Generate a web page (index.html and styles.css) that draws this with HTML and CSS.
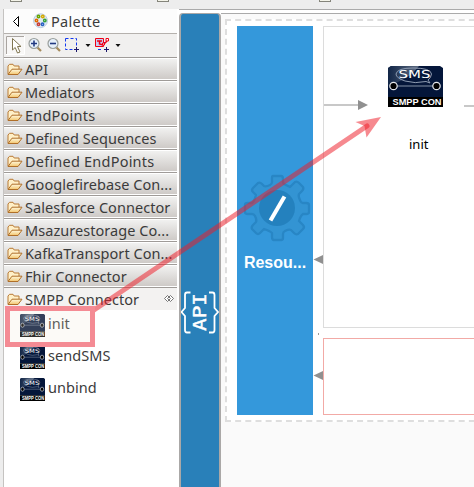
FILE: index.html
```html
<!DOCTYPE html>
<html lang="en">
<head>
<meta charset="utf-8">
<title>Palette</title>
<link rel="stylesheet" href="styles.css">
</head>
<body>
<svg class="defs" width="0" height="0">
  <defs>
    <linearGradient id="paper" x1="0" y1="0" x2="0" y2="1"><stop offset="0" stop-color="#fff9df"/><stop offset="1" stop-color="#f3c56c"/></linearGradient>
    <linearGradient id="shine" x1="0" y1="0" x2="1" y2="0"><stop offset="0" stop-color="#162b4b"/><stop offset="1" stop-color="#7a8799"/></linearGradient>
    <symbol id="folder" viewBox="0 0 16 13">
      <path d="M1 11V3L2.500 1.300H6L7.200 3H12V6" fill="#fff0c8" stroke="#b97a35"/>
      <path d="M1 11.500L5 6.200H15L11 11.500Z" fill="url(#paper)" stroke="#b06f28"/>
    </symbol>
    <symbol id="sms" viewBox="0 0 55 41">
      <path d="M0 2L3 0H52L55 2V31H0Z" fill="#04163a"/>
      <path d="M0 2L3 0H31L25 7Q15 15 0 20Z" fill="url(#shine)" opacity=".75"/>
      <path d="M38 15.500Q27 18 17 15Q8 12 8 8Q9 2 25 2Q43 2 43.500 8Q43 12 40 14L42 17Z" fill="none" stroke="#8d9bb1"/>
      <text x="10.500" y="11.800" textLength="32" lengthAdjust="spacingAndGlyphs" class="sms-word">SMS</text>
      <path d="M9 20H45" stroke="#43536f" stroke-width="2"/>
      <circle cx="5.500" cy="20" r="3.700" fill="#000" stroke="#e4e7ec" stroke-width="1.200"/>
      <circle cx="48.500" cy="20" r="3.700" fill="#000" stroke="#e4e7ec" stroke-width="1.200"/>
      <path d="M0 31H55V41H0Z" fill="#000"/>
      <text x="4.500" y="39" textLength="49" lengthAdjust="spacingAndGlyphs" class="sms-label">SMPP CON</text>
    </symbol>
  </defs>
</svg>
<div class="app">
  <div class="strip"><i class="tab t1"></i><i class="tab t2"></i><i class="tab t3"></i></div>
  <div class="main">
    <aside class="palette">
      <header class="title">
        <svg width="50" height="24" viewBox="4 9 50 24">
          <path d="M18.500 16.500V26.500L13.500 21.500Z" fill="#fff" stroke="#000"/>
          <circle cx="40.500" cy="20.700" r="6.900" fill="#dfe9f3" stroke="#b9cbe0"/>
          <g fill="#fff" stroke-width="1.500"><circle cx="38.500" cy="16.500" r="1.200" stroke="#68a500"/><circle cx="42.800" cy="16.500" r="1.200" stroke="#d5a900"/><circle cx="36.500" cy="20.500" r="1.200" stroke="#e26b00"/><circle cx="44.800" cy="20.500" r="1.200" stroke="#34a037"/><circle cx="38.500" cy="24.300" r="1.200" stroke="#c83c38"/><circle cx="42.500" cy="24.300" r="1.200" stroke="#2862c4"/></g>
        </svg>
        <span>Palette</span>
      </header>
      <div class="tools">
        <svg width="173" height="23" viewBox="4 34 173 23">
          <path d="M6 36H24V54H6Z" fill="#f8f7f6"/><path d="M6.500 54V36.500H24" stroke="#a9a4a0" fill="none"/><path d="M24.500 36V54.500H6" stroke="#fff" fill="none"/>
          <path d="M12.500 38.500V50L15.200 47.500L17.500 53L20 52L17.500 46.500H21Z" fill="#fff" stroke="#807551"/>
          <g fill="none"><path d="M37.500 47.500L41 51" stroke="#a58b5c" stroke-width="2.200"/><circle cx="34" cy="43.500" r="5" fill="#e6f0fb" stroke="#9a9f9c" stroke-width="1.200"/><path d="M31 43.500H37M34 40.500V46.500" stroke="#223a82" stroke-width="1.600"/>
          <path d="M56.500 47.500L60 51" stroke="#a58b5c" stroke-width="2.200"/><circle cx="53" cy="43.500" r="5" fill="#e6f0fb" stroke="#9a9f9c" stroke-width="1.200"/><path d="M50 43.500H56" stroke="#223a82" stroke-width="1.600"/>
          <path d="M65.500 38.500H76.500V46M65.500 38.500V49.500H73" stroke="#1238f0" stroke-dasharray="3 2"/><path d="M74 49.500H79M76.500 47V52" stroke="#1c176b"/>
          <path d="M98 49.500H103M98.500 44V48M104.500 42V46" stroke="#1238f0" stroke-dasharray="3 2"/><path d="M104 49.500H109M106.500 47V52" stroke="#1c176b"/>
          <path d="M95.500 38.500H103.500V46.500H95.500Z" fill="#c4cdf5" stroke="#f00014"/><path d="M97 41H102M99.500 41V44L103 45L107 41" stroke="#f00014" stroke-width="1.500"/><path d="M106 38.500H108.500V41H106ZM102.500 43H104.500V45H102.500Z" fill="#fff" stroke="#f00014"/></g>
          <path d="M85.500 44H90.500L88 47ZM115.500 44H120.500L118 47Z" fill="#111"/>
        </svg>
      </div>
      <div class="drawer"><svg class="folder"><use href="#folder"/></svg><span>API</span></div>
      <div class="drawer"><svg class="folder"><use href="#folder"/></svg><span>Mediators</span></div>
      <div class="drawer wide"><svg class="folder"><use href="#folder"/></svg><span>EndPoints</span></div>
      <div class="drawer"><svg class="folder"><use href="#folder"/></svg><span>Defined Sequences</span></div>
      <div class="drawer wide"><svg class="folder"><use href="#folder"/></svg><span>Defined EndPoints</span></div>
      <div class="drawer"><svg class="folder"><use href="#folder"/></svg><span>Googlefirebase Con...</span></div>
      <div class="drawer"><svg class="folder"><use href="#folder"/></svg><span>Salesforce Connector</span></div>
      <div class="drawer"><svg class="folder"><use href="#folder"/></svg><span>Msazurestorage Co...</span></div>
      <div class="drawer"><svg class="folder"><use href="#folder"/></svg><span>KafkaTransport Con...</span></div>
      <div class="drawer"><svg class="folder"><use href="#folder"/></svg><span>Fhir Connector</span></div>
      <div class="drawer open"><svg class="folder"><use href="#folder"/></svg><span>SMPP Connector</span>
        <svg class="pin" width="10" height="7" viewBox="0 0 10 7"><path d="M3.500 .5L.5 3.500L3.500 6.500L5 5L3.500 3.500L5 2ZM6.500 .5L9.500 3.500L6.500 6.500L5 5L6.500 3.500L5 2Z" fill="#fff" stroke="#666" stroke-width=".9"/></svg>
      </div>
      <div class="entry"><svg class="thumb" viewBox="0 0 55 41" preserveAspectRatio="none"><use href="#sms"/></svg><span>init</span></div>
      <div class="entry"><svg class="thumb" viewBox="0 0 55 41" preserveAspectRatio="none"><use href="#sms"/></svg><span>sendSMS</span></div>
      <div class="entry"><svg class="thumb" viewBox="0 0 55 41" preserveAspectRatio="none"><use href="#sms"/></svg><span>unbind</span></div>
    </aside>
    <section class="editor">
      <div class="api">
        <svg width="38" height="46" viewBox="181 290 38 46">
          <g fill="none" stroke="#fff" stroke-width="1.800"><path d="M190.500 292.500H187Q185 292.500 185 295V308L181.500 312L185 316V330Q185 332.500 187 332.500H190.500M209 292.500H212.500Q214.500 292.500 214.500 295V308L218 312L214.500 316V330Q214.500 332.500 212.500 332.500H209"/></g>
          <text transform="translate(205.800 331) rotate(-90)" textLength="38" lengthAdjust="spacingAndGlyphs" class="api-text">API</text>
        </svg>
      </div>
      <div class="canvas">
        <div class="frame">
          <div class="resource">
            <svg width="76" height="70" viewBox="239 173 76 70">
              <g fill="#3394d3" stroke="#2886c5" stroke-width="2.300" stroke-linejoin="round"><path d="M273 176H281Q283 176 283 179V182Q283 184 286 185L290 187L295 182Q297 181 299 183L303 187Q304 189 302 191L299 194Q298 196 300 200Q301 203 303 203H306Q309 203 309 205V212Q309 214 306 214H303Q301 215 299 221L303 225Q305 227 303 229L298 234Q296 235 294 233L291 230Q289 229 285 231Q283 232 283 234V238Q283 240 281 240H274Q272 240 272 237V233Q270 231 264 229L260 233Q258 235 256 233L252 229Q251 227 253 225L256 222Q257 220 255 216Q254 214 252 214H248Q245 214 245 212V205Q245 203 248 203H252Q254 202 256 195L253 192Q251 190 253 188L258 183Q260 182 262 184L264 186Q266 187 270 185Q272 184 272 182V178Q272 176 273 176Z"/></g>
              <circle cx="277" cy="208" r="18" fill="#2481be"/><path d="M270.500 220.500L284.500 196.500" stroke="#fff" stroke-width="4"/>
            </svg>
            <b>Resou...</b>
          </div>
          <div class="flows">
            <div class="flow in">
              <svg class="node" width="55" height="41"><use href="#sms"/></svg>
              <span>init</span>
            </div>
            <div class="flow fault"></div>
          </div>
        </div>
      </div>
    </section>
  </div>
  <svg class="overlay" width="474" height="487" viewBox="0 0 474 487">
    <path d="M324 105H359M464 106H474" stroke="#c8c8c8" stroke-width="2"/>
    <path d="M358 100L368 105L358 110Z" fill="#909090"/>
    <path d="M313.500 259.500L323 255V264ZM313.500 375.500L323 371V380Z" fill="#909090"/>
    <path d="M318.500 333V335" stroke="#999"/>
    <path d="M94 310L367 126" fill="none" stroke="#ee1c28" stroke-opacity=".52" stroke-width="5" stroke-linecap="round"/>
    <path d="M381 117L355.500 122L364.500 126L366.500 137.500Z" fill="#ee1c28" fill-opacity=".52"/>
    <path d="M7.500 308.500H92.500V344.500H7.500Z" fill="#eee7d8" fill-opacity=".2" stroke="#f48b94" stroke-width="5"/>
  </svg>
</div>
</body>
</html>
```
FILE: styles.css
```css
* { box-sizing: border-box; }
body { margin: 0; overflow: hidden; background: #ededed; font-family: "Noto Sans", sans-serif; color: #3b3b3b; }
svg { display: block; flex: none; }
.defs { position: absolute; }
.app { position: relative; width: 474px; height: 487px; overflow: hidden; display: flex; flex-direction: column; }
.strip { height: 9px; flex: none; display: flex; padding-left: 10px; }
.tab { width: 12px; height: 2px; border: solid #85857b; border-width: 0 1px 1px; background: #f4f4e9; }
.t2 { margin-left: 135px; }
.t3 { margin-left: 150px; }
.main { display: flex; flex: 1; min-height: 0; }
.palette { width: 176px; flex: none; border-left: 1px solid #c5c3c1; margin-left: 3px; padding-right: 2px; background: #fff; }
.title { height: 25px; display: flex; align-items: center; border-bottom: 1px solid #b5b1ad; background: #fcfcfc; font-size: 14.5px; }
.title span { margin-left: -3px; letter-spacing: .3px; }
.tools { height: 23px; background: #f1f0ef; }
.drawer { height: 23px; display: flex; align-items: center; padding: 1px 0 0 3px; border-top: 1px solid #9f9b98; font-size: 14.5px; line-height: 18px; letter-spacing: .05px; white-space: nowrap; background: linear-gradient(#fff 0 1px, #f1f1f0 1px, #cecac7 21px, #fff 21px); }
.drawer.open { background: #f3f2f1; }
.drawer.wide { letter-spacing: .22px; }
.folder { width: 16px; height: 13px; }
.drawer span { margin: -2px 0 0 2px; }
.pin { margin: -2px 3px 0 auto; }
.entry { height: 32px; display: flex; align-items: center; padding: 2px 0 2px 16px; font-size: 14.5px; letter-spacing: .05px; }
.drawer.open + .entry { margin-top: -2px; }
.thumb { width: 25px; height: 23px; margin-top: 3px; }
.entry span { margin: -2px 0 0 3px; }
.sms-word { font: 10.5px "DejaVu Sans", sans-serif; fill: #fff; }
.sms-label { font: bold 9px "Liberation Sans", sans-serif; fill: #fff; }
.editor { flex: 1; display: flex; min-width: 0; border-top: 1px solid #aaa; background: #fff; }
.api { width: 42px; flex: none; margin-top: 3px; border: 2px solid #aaa8a7; border-width: 1px 2px 0; border-radius: 4px 4px 0 0; background: #2980b9; padding-top: 276px; }
.api-text { font: 17.5px "DejaVu Sans Mono", monospace; fill: #fff; stroke: #fff; stroke-width: .4px; }
.canvas { flex: 1; margin-top: 3px; border-top: 1px solid #aaa; background: #fafafa; padding: 5px 0 0 4px; min-width: 0; }
.frame { height: 403px; width: 260px; border: 2px dashed #dedede; background: #fff; padding: 5px 0 0 10px; display: flex; }
.resource { width: 76px; height: 389px; flex: none; background: #3498db; padding: 147px 0 0; text-align: center; }
.resource svg { margin-left: 2px; }
.resource b { display: block; margin-top: 11px; font: bold 16px/18px "Liberation Sans", sans-serif; color: #fff; }
.flows { width: 160px; flex: none; margin-left: 10px; display: flex; flex-direction: column; gap: 10px; }
.flow { border: 1px solid #dcdcdc; background: #fff; }
.in { height: 302px; padding: 39px 0 0 64px; color: #000; font-size: 13px; }
.in span { display: block; margin: 28px 0 0 21px; line-height: 18px; }
.fault { height: 77px; border-color: #f2aaa6; }
.overlay { position: absolute; left: 0; top: 0; }
```
